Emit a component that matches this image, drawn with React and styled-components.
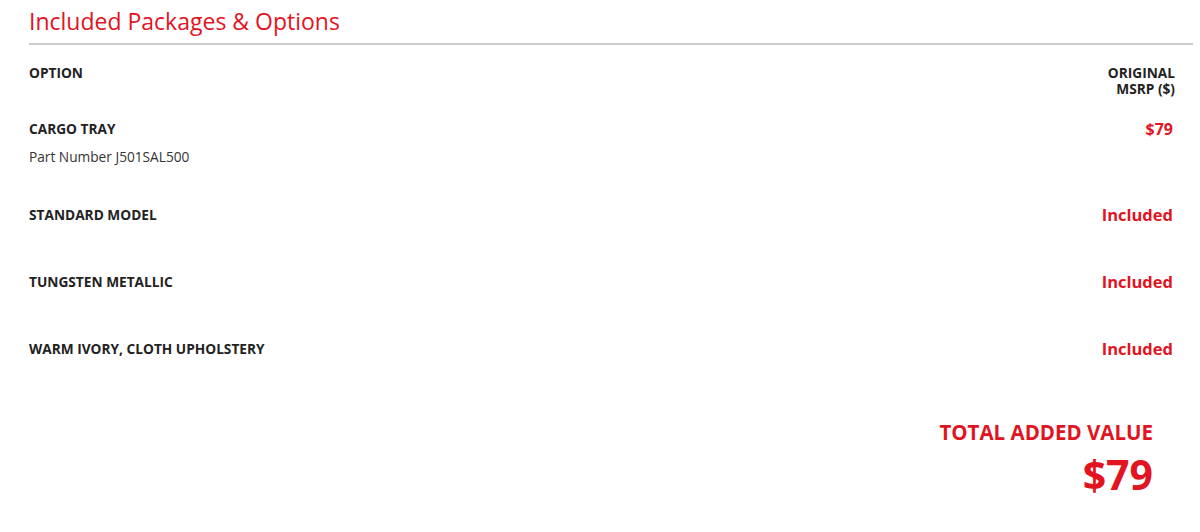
import styled, { createGlobalStyle } from 'styled-components'

const GlobalStyle = createGlobalStyle`
  body {
    margin: 0;
    background: #fff;
    font-family: 'Open Sans', 'Liberation Sans', sans-serif;
    color: #222;
  }
`

const RED = '#e1141f'

const options = [
  { name: 'Cargo Tray', part: 'J501SAL500', price: '$79' },
  { name: 'Standard Model', price: 'Included' },
  { name: 'Tungsten Metallic', price: 'Included' },
  { name: 'Warm Ivory, Cloth Upholstery', price: 'Included' },
]

const App = () => {
  return (
    <Container>
      <GlobalStyle />
      <Title>Included Packages &amp; Options</Title>
      <HeaderRow>
        <HeadCell>Option</HeadCell>
        <HeadCell align='right'>
          Original
          <br />
          MSRP ($)
        </HeadCell>
      </HeaderRow>
      {options.map((o) =>
        o.part ? (
          <PartRow key={o.name}>
            <Details>
              <OptionName>{o.name}</OptionName>
              <PartNumber>Part Number {o.part}</PartNumber>
            </Details>
            <Price>{o.price}</Price>
          </PartRow>
        ) : (
          <Row key={o.name}>
            <OptionName>{o.name}</OptionName>
            <Included>{o.price}</Included>
          </Row>
        )
      )}
      <Total>
        <TotalLabel>Total Added Value</TotalLabel>
        <TotalAmount>$79</TotalAmount>
      </Total>
    </Container>
  )
}

const Container = styled.div`
  padding: 0 7px 0 29px;
  width: 1164px;
`

const Title = styled.h2`
  margin: 0;
  padding: 6px 0 6px;
  font-size: 23px;
  line-height: 31px;
  font-weight: 400;
  color: ${RED};
  border-bottom: 2px solid #cbcbcb;
`

const HeaderRow = styled.div`
  display: flex;
  justify-content: space-between;
  align-items: flex-start;
  margin-top: 20px;
  padding-right: 18px;
`

const HeadCell = styled.div`
  font-size: 13.7px;
  line-height: 16px;
  font-weight: 700;
  text-transform: uppercase;
  text-align: ${(props) => props.align || 'left'};
`

const PartRow = styled.div`
  display: flex;
  justify-content: space-between;
  align-items: flex-start;
  margin-top: 24px;
  padding-right: 20px;
`

const Details = styled.div`
  display: flex;
  flex-direction: column;
  gap: 12px;
`

const OptionName = styled.span`
  font-size: 13.7px;
  line-height: 16px;
  font-weight: 700;
  text-transform: uppercase;
`

const PartNumber = styled.span`
  font-size: 13.7px;
  line-height: 16px;
  color: #333;
`

const Price = styled.span`
  font-size: 16px;
  line-height: 16px;
  font-weight: 700;
  color: ${RED};
`

const Row = styled.div`
  display: flex;
  justify-content: space-between;
  align-items: center;
  height: 67px;
  padding-right: 20px;

  &:nth-of-type(3) {
    margin-top: 16px;
  }
`

const Included = styled.span`
  font-size: 16.5px;
  line-height: 20px;
  font-weight: 700;
  color: ${RED};
`

const Total = styled.div`
  display: flex;
  flex-direction: column;
  align-items: flex-end;
  margin-top: 38px;
  padding-right: 40px;
  gap: 8px;
`

const TotalLabel = styled.span`
  font-size: 20.5px;
  line-height: 24px;
  font-weight: 700;
  text-transform: uppercase;
  color: ${RED};
`

const TotalAmount = styled.span`
  font-size: 41px;
  line-height: 44px;
  font-weight: 700;
  color: ${RED};
`

export default App
